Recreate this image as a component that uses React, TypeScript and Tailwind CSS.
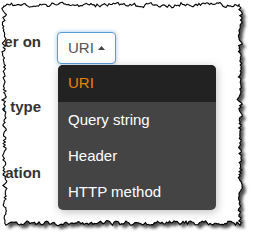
import type { FC } from "react";

type Option = { label: string; selected?: boolean };

const options: Option[] = [
  { label: "URI", selected: true },
  { label: "Query string" },
  { label: "Header" },
  { label: "HTTP method" },
];

// torn paper edge, drawn once from a seeded random walk
const tornPath = (() => {
  let seed = 29;
  const rand = () => {
    seed = (seed * 1103515245 + 12345) % 2147483648;
    return seed / 2147483648;
  };
  let v = 0;
  const jit = () => {
    v = v * 0.45 + (rand() - 0.5) * 3.6;
    if (rand() > 0.9) v += (rand() - 0.5) * 3;
    if (v > 2.8) v = 2.8;
    if (v < -2.8) v = -2.8;
    return v;
  };
  const pts: string[] = [];
  for (let x = 4; x < 240; x += 1.5) pts.push(`${x},${(5 + jit()).toFixed(1)}`);
  for (let y = 5; y < 223; y += 1.5) pts.push(`${(240 + jit()).toFixed(1)},${y}`);
  for (let x = 240; x > 4; x -= 1.5) pts.push(`${x},${(223 + jit()).toFixed(1)}`);
  for (let y = 223; y > 5; y -= 1.5) pts.push(`${(4.5 + jit()).toFixed(1)},${y}`);
  return "M" + pts.join(" L") + " Z";
})();

const TornEdge: FC = () => (
  <svg className="pointer-events-none absolute inset-0" width="255" height="240" viewBox="0 0 255 240">
    <defs>
      <filter id="blur" x="-10%" y="-10%" width="120%" height="120%">
        <feGaussianBlur stdDeviation="1.5" />
      </filter>
      <mask id="outside">
        <rect width="255" height="240" fill="white" />
        <path d={tornPath} fill="black" />
      </mask>
    </defs>
    <path d={`M0,0 H255 V240 H0 Z ${tornPath}`} fill="#fff" fillRule="evenodd" />
    <g mask="url(#outside)">
      <path d={tornPath} fill="#000" opacity="0.7" transform="translate(3.5,3.5)" filter="url(#blur)" />
    </g>
    <path d={tornPath} fill="none" stroke="#000" strokeWidth="1.1" />
  </svg>
);

const Label: FC<{ text: string }> = ({ text }) => (
  <div className="flex w-[41px] shrink-0 justify-end whitespace-nowrap text-[15px] font-bold leading-5 text-[#333]">
    {text}
  </div>
);

const App: FC = () => {
  return (
    <div className="relative h-[240px] w-[255px] overflow-hidden bg-white font-['Liberation_Sans',Arial,sans-serif]">
      <div className="flex flex-col pt-8">
        <div className="flex h-8 items-start gap-4">
          <Label text="Filter on" />
          <div className="relative">
            <button className="flex items-center rounded-[4px] border border-[#5b9dd9] bg-white px-[10px] py-[5px] text-[15px] leading-5 text-[#555] shadow-[0_0_4px_rgba(102,175,233,0.7)]">
              URI
              <svg className="ml-[4px]" width="7" height="4" viewBox="0 0 7 4">
                <polygon points="0,4 3.5,0 7,4" fill="#444" />
              </svg>
            </button>
            <div className="absolute left-px top-[33px] z-10 w-[158px] overflow-hidden rounded-[5px] bg-[#444] shadow-[1px_2px_8px_rgba(0,0,0,0.25)]">
              {options.map((o) => (
                <div
                  key={o.label}
                  className={
                    o.selected
                      ? "flex h-[37px] items-center bg-[#222] pl-[10px] text-[15px] text-[#e8820c]"
                      : "flex h-9 items-center pl-[10px] text-[15px] text-white"
                  }
                >
                  {o.label}
                </div>
              ))}
            </div>
          </div>
        </div>
        <div className="mt-[33px] flex h-8 items-start gap-4">
          <Label text="Condition type" />
        </div>
        <div className="mt-[34px] flex h-8 items-start gap-4">
          <Label text="Destination" />
        </div>
      </div>
      <TornEdge />
    </div>
  );
};

export default App;
